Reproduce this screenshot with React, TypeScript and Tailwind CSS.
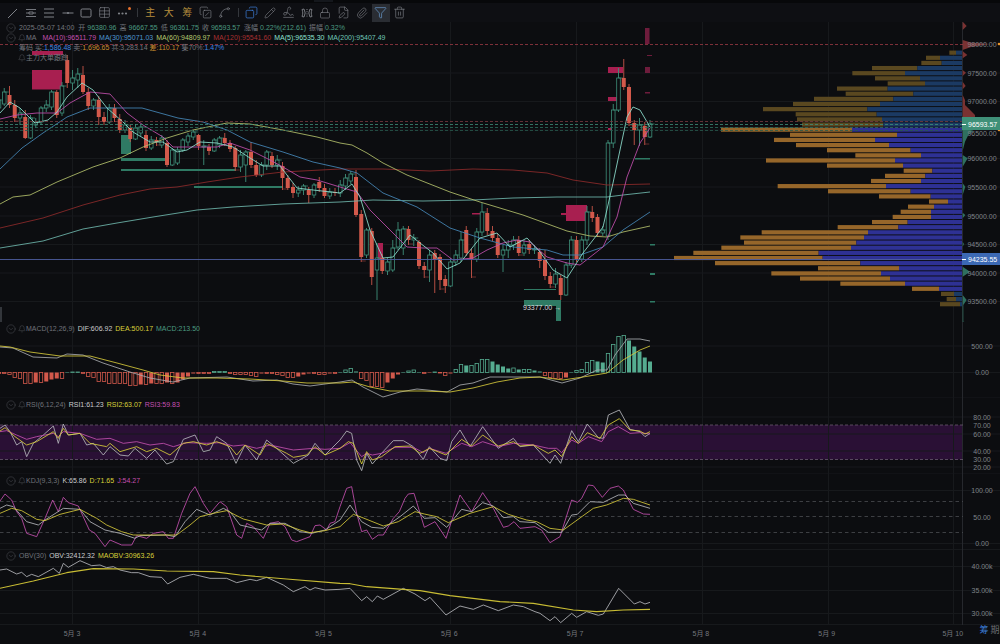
import { Bell, CircleChevronDown, Copy, CopySlash, FilePen, Funnel, Lock, Paperclip, Pencil, Signature, Spline, Table, Trash2 } from 'lucide-react'
import type { ReactNode } from 'react'

const GRID_X = [72.5, 198.5, 324.5, 450.5, 576.5, 702.5, 828.5, 953.5]
const GRID = '#17191c'

// zoom crop coordinates -> page coordinates
const z = (a: number[], x0: number, y0: number) => a.map((v, i) => (i % 2 ? y0 + v / 3 : x0 + v / 3))
const pts = (a: number[]) => a.join(' ')

// open, close (page y), high, low
const CANDLES: number[][] = [
  [108, 100, 96, 112], [104, 92, 88, 106], [95, 105, 86, 108], [105, 118, 100, 122], [118, 113, 108, 125],
  [117, 138, 110, 139], [138, 118, 115, 139], [125, 122, 118, 128], [122, 108, 106, 125], [108, 105, 100, 112],
  [107, 92, 90, 110], [92, 115, 90, 118], [113, 86, 82, 116], [60, 83, 55, 88], [83, 78, 70, 90],
  [80, 74, 68, 88], [75, 92, 66, 94], [92, 106, 88, 110], [106, 100, 98, 110], [100, 117, 96, 125],
  [117, 122, 112, 125], [122, 108, 104, 124], [108, 118, 104, 122], [119, 130, 114, 133], [130, 125, 120, 133],
  [128, 139, 125, 142], [139, 128, 124, 140], [133, 127, 124, 136], [135, 148, 130, 151], [148, 140, 136, 150],
  [140, 142, 137, 146], [145, 138, 135, 148], [143, 165, 140, 167], [165, 150, 148, 166], [163, 150, 147, 165],
  [150, 140, 138, 152], [142, 136, 133, 146], [137, 132, 130, 140], [135, 146, 134, 150], [146, 146, 140, 165],
  [147, 151, 144, 155], [151, 140, 138, 152], [145, 138, 136, 148], [138, 143, 133, 146], [143, 149, 140, 152],
  [148, 167, 146, 171], [167, 155, 150, 172], [165, 152, 150, 182], [152, 165, 142, 168], [165, 175, 160, 177],
  [175, 165, 162, 177], [165, 152, 150, 170], [156, 165, 152, 168], [165, 160, 155, 170], [166, 178, 162, 190],
  [178, 188, 175, 190], [187, 193, 183, 198], [193, 190, 186, 197], [190, 186, 184, 195], [190, 195, 187, 203],
  [195, 185, 183, 198], [182, 188, 177, 192], [188, 196, 184, 198], [196, 192, 188, 199], [192, 193, 188, 196],
  [193, 185, 180, 197], [186, 178, 174, 190], [181, 174, 171, 184], [177, 215, 170, 217], [214, 257, 210, 262],
  [255, 230, 228, 258], [231, 277, 228, 285], [270, 258, 243, 300], [258, 271, 254, 274], [271, 262, 258, 275],
  [270, 248, 240, 272], [247, 230, 222, 250], [248, 229, 226, 255], [229, 240, 226, 245], [240, 238, 234, 246],
  [242, 266, 240, 269], [266, 270, 262, 278], [270, 255, 250, 282], [253, 260, 250, 293], [257, 280, 254, 290],
  [279, 286, 275, 293], [286, 262, 258, 287], [262, 255, 250, 266], [258, 240, 232, 262], [230, 253, 226, 256],
  [253, 259, 249, 278], [259, 232, 228, 262], [232, 212, 203, 236], [213, 231, 208, 235], [231, 238, 226, 241],
  [238, 255, 234, 258], [255, 250, 245, 272], [250, 245, 240, 258], [245, 240, 236, 250], [240, 253, 236, 256],
  [253, 245, 240, 256], [244, 250, 240, 254], [250, 249, 245, 254], [252, 261, 248, 268], [260, 276, 250, 280],
  [276, 284, 272, 288], [284, 274, 268, 288], [278, 295, 275, 300], [295, 265, 262, 296], [265, 240, 236, 268],
  [240, 259, 236, 262], [259, 240, 236, 262], [240, 212, 206, 245], [212, 218, 206, 222], [217, 233, 214, 237],
  [233, 230, 226, 236], [236, 143, 140, 240], [143, 110, 104, 148], [110, 78, 68, 112], [78, 87, 59, 90],
  [87, 123, 84, 126], [123, 130, 120, 145], [130, 125, 118, 146], [126, 137, 122, 145], [137, 124, 120, 138],
]

const MA5 = [0, 113, 10, 102, 20, 108, 35, 123, 48, 120, 57, 112, 67, 97, 82, 83, 93, 90, 107, 108, 123, 122, 133, 132, 150, 142, 163, 142, 177, 152, 187, 150, 200, 142, 217, 143, 233, 147, 250, 158, 263, 166, 280, 166, 297, 188, 313, 190, 340, 193, 352, 184, 360, 197, 370, 230, 383, 258, 393, 257, 410, 235, 420, 243, 433, 253, 447, 269, 460, 263, 480, 238, 497, 233, 510, 247, 527, 238, 540, 252, 553, 270, 567, 278, 583, 253, 603, 227, 613, 183, 627, 117, 633, 107, 640, 110, 650, 127]
const MA10 = [0, 119, 17, 115, 37, 113, 57, 113, 70, 103, 90, 92, 110, 94, 127, 113, 143, 125, 163, 137, 173, 147, 200, 147, 217, 147, 230, 143, 250, 150, 270, 160, 283, 167, 300, 177, 317, 180, 340, 187, 357, 192, 370, 210, 390, 230, 407, 247, 423, 248, 437, 248, 453, 260, 473, 258, 487, 250, 503, 243, 517, 240, 530, 242, 547, 257, 567, 263, 580, 265, 603, 247, 617, 217, 627, 177, 640, 143, 650, 128]
const MA30 = [0, 169, 22, 148, 43, 133, 67, 117, 90, 108, 142, 108, 160, 113, 178, 118, 203, 122, 227, 130, 250, 142, 283, 152, 313, 162, 340, 168, 357, 173, 383, 193, 417, 207, 450, 228, 480, 238, 513, 247, 547, 250, 563, 255, 580, 255, 603, 247, 623, 230, 650, 212]
const MA60 = [0, 204, 13, 197, 30, 195, 57, 182, 93, 167, 120, 158, 143, 147, 167, 138, 193, 130, 227, 123, 250, 124, 283, 130, 317, 137, 340, 143, 352, 145, 367, 153, 383, 163, 407, 175, 450, 192, 480, 202, 523, 215, 567, 231, 590, 236, 607, 237, 623, 232, 650, 226]
const MA120 = [0, 228, 43, 218, 83, 205, 120, 195, 150, 189, 177, 187, 207, 182, 240, 177, 283, 172, 340, 169, 383, 169, 430, 171, 473, 169, 513, 170, 547, 173, 573, 180, 607, 185, 650, 184]
const MA200 = [0, 248, 43, 241, 83, 229, 117, 223, 153, 217, 197, 210, 233, 207, 283, 204, 340, 202, 373, 200, 423, 201, 473, 200, 513, 198, 557, 197, 607, 197, 623, 195, 650, 192]

// left edge of the orange part, split with the blue part (zoom px), top to bottom
const PROFILE = [
  [838, 858], [768, 810], [754, 815], [606, 742], [547, 705], [615, 750], [653, 765], [501, 653], [527, 730], [432, 670],
  [369, 630], [279, 592], [377, 620], [381, 636], [396, 640], [153, 546], [360, 681], [312, 615], [378, 657], [471, 722],
  [556, 753], [288, 675], [471, 699], [701, 787], [645, 766], [603, 753], [323, 648], [474, 722], [627, 782], [777, 834],
  [714, 792], [692, 783], [668, 783], [606, 713], [503, 685], [275, 594], [211, 582], [222, 559], [154, 543], [70, 446],
  [12, 458], [135, 571], [444, 687], [304, 633], [390, 660], [511, 705], [726, 807], [813, 852], [830, 858], [810, 870],
]
const DIM_ROWS = [0, 1, 2, 3, 4, 5, 6, 7, 8, 9, 10, 11, 12, 13, 14, 47, 48, 49]

const EDGE_RED = [878, 5, 890, 18, 878, 30, 878, 60, 905, 68, 960, 72, 905, 80, 878, 90, 880, 95, 892, 105, 878, 115, 878, 150, 888, 158, 878, 168, 878, 185, 887, 198, 878, 208, 878, 225, 885, 240, 885, 255, 895, 265, 915, 285, 915, 295, 878, 298]
const EDGE_GREEN = [878, 325, 910, 332, 895, 345, 885, 365, 878, 392, 878, 405, 893, 415, 878, 440, 878, 490, 886, 500, 878, 525, 878, 578, 886, 585, 878, 595, 878, 665, 882, 672, 878, 680, 878, 740, 900, 755, 878, 770, 878, 825, 890, 840, 880, 855, 880, 905, 892, 908, 878, 912]

const HIST = [
  -1, -1, -2, -5, -6, -11, -11, -10, -10, -9, -7, -6, -6, 0.5, 0.5, 0.5, -1, -4, -5, -9, -9, -11, -11, -11, -11,
  -13, -13, -12, -12, -11, -11, -11, -10, -11, -10, -7, -4, -1, -1, -1, -1, 1, 1, 1, -1, -2, -2, -2, -3, -4,
  -1, -1, -1, -2, -3, -5, -5, -4, -2, -1, -1, -2, -2, -1, -1, 0.5, 2.5, 4, 1, -6, -8, -14, -14, -15, -10, -6, -2,
  0.5, 1.5, 2.5, 0.5, -1, -0.5, 0.5, -0.5, -3, -1, 3, 8, 7, 7, 9, 13, 13, 11, 8, 6, 4, 4.5, 3, 3, 3,
  2, 1, -3, -5, -6, -6, -5, 0.5, 2, 3, 10, 12, 11, 10, 19, 28, 36, 37, 32, 26, 21, 15, 11,
]

const DEA = [0, 346, 10, 347, 30, 352, 60, 356, 90, 356, 117, 363, 143, 370, 160, 375, 183, 378, 217, 378, 250, 379, 283, 381, 307, 383, 340, 383, 353, 382, 370, 387, 390, 391, 423, 391, 450, 392, 473, 388, 497, 382, 520, 378, 540, 377, 563, 380, 583, 377, 607, 373, 623, 360, 640, 350, 650, 346]
const DIF = [0, 347, 13, 348, 33, 357, 57, 358, 67, 354, 83, 355, 103, 363, 130, 372, 150, 378, 173, 382, 190, 378, 227, 377, 253, 381, 277, 380, 293, 384, 310, 386, 340, 382, 352, 380, 363, 387, 383, 397, 400, 392, 417, 389, 447, 392, 460, 385, 473, 383, 490, 377, 513, 377, 540, 377, 562, 383, 580, 378, 597, 370, 607, 370, 615, 355, 627, 339, 640, 339, 650, 341]

const RSI1 = [...z([0, 325, 15, 315, 30, 335, 50, 375, 65, 365, 80, 410, 100, 370, 130, 345, 160, 318, 175, 370, 190, 312, 205, 345, 240, 340, 260, 375, 280, 370, 310, 405, 330, 380, 360, 405, 385, 408, 405, 385, 440, 415, 465, 390, 500, 432, 520, 425, 550, 358, 585, 345, 610, 395, 630, 390, 650, 350, 680, 370, 708, 430, 735, 375, 770, 420, 800, 360, 830, 385, 880, 430, 925, 405, 945, 370, 975, 405, 1020, 360], 0, 320), ...z([20, 333, 35, 340, 50, 420, 65, 452, 80, 400, 97, 432, 120, 405, 160, 362, 190, 362, 220, 380, 250, 418, 268, 380, 300, 415, 320, 422, 335, 365, 360, 330, 390, 380, 428, 320, 475, 385, 520, 355, 540, 380, 580, 375, 630, 430, 645, 405, 662, 430, 695, 332, 715, 365, 742, 312, 775, 353, 790, 355, 805, 285, 838, 270, 870, 328, 900, 335, 915, 350, 930, 340], 340, 320)]
const RSI2 = [...z([0, 333, 15, 323, 45, 350, 80, 375, 110, 365, 160, 335, 175, 355, 190, 325, 205, 345, 240, 340, 270, 370, 320, 380, 330, 370, 360, 395, 410, 380, 440, 395, 470, 385, 510, 405, 550, 370, 580, 365, 620, 375, 650, 365, 690, 380, 710, 405, 735, 375, 780, 405, 800, 370, 860, 400, 880, 412, 920, 405, 945, 380, 975, 405, 1020, 385], 0, 320), ...z([25, 365, 40, 370, 65, 432, 80, 395, 97, 420, 125, 410, 165, 380, 210, 378, 240, 400, 268, 385, 318, 405, 365, 358, 395, 378, 428, 345, 475, 378, 520, 365, 540, 378, 580, 375, 625, 400, 645, 390, 665, 410, 695, 350, 715, 370, 742, 338, 780, 355, 805, 315, 838, 296, 870, 330, 900, 333, 915, 342, 930, 335], 340, 320)]
const RSI3 = [...z([0, 335, 20, 332, 50, 345, 80, 358, 110, 350, 160, 340, 175, 350, 190, 335, 240, 340, 290, 358, 330, 355, 370, 370, 410, 365, 450, 375, 490, 370, 520, 380, 560, 368, 620, 370, 660, 368, 700, 378, 730, 375, 770, 385, 810, 375, 880, 390, 940, 385, 975, 388, 1020, 385], 0, 320), ...z([30, 368, 65, 410, 80, 400, 97, 405, 125, 400, 165, 382, 220, 382, 250, 398, 268, 385, 318, 400, 365, 370, 395, 380, 428, 365, 475, 380, 520, 370, 580, 375, 625, 385, 650, 385, 665, 398, 695, 360, 715, 370, 745, 350, 785, 365, 805, 335, 835, 320, 870, 340, 900, 338, 930, 342], 340, 320)]

const KDJ_J = [...z([0, 93, 15, 72, 35, 90, 50, 125, 65, 145, 80, 190, 110, 200, 135, 145, 158, 90, 175, 125, 190, 82, 205, 98, 235, 108, 268, 180, 285, 190, 315, 230, 330, 210, 365, 225, 395, 225, 410, 197, 440, 205, 460, 190, 490, 185, 505, 205, 520, 205, 545, 130, 570, 70, 585, 50, 610, 100, 630, 130, 660, 95, 680, 110, 710, 195, 725, 205, 740, 160, 760, 170, 790, 205, 810, 160, 835, 155, 855, 170, 875, 210, 890, 215, 930, 200, 945, 167, 960, 165, 980, 180, 990, 160, 1005, 155, 1020, 110], 0, 470), ...z([20, 55, 35, 50, 50, 130, 65, 185, 80, 180, 97, 208, 115, 195, 130, 195, 160, 145, 178, 125, 195, 85, 205, 72, 222, 70, 253, 172, 285, 155, 318, 205, 360, 75, 395, 125, 428, 68, 460, 115, 490, 172, 505, 168, 522, 155, 540, 175, 585, 170, 605, 180, 630, 218, 660, 200, 695, 90, 712, 97, 725, 85, 745, 45, 760, 47, 787, 82, 810, 55, 835, 48, 850, 60, 880, 118, 910, 132, 930, 133], 340, 470)]
const KDJ_K = [...z([0, 115, 20, 105, 40, 110, 80, 155, 115, 165, 135, 150, 190, 115, 240, 118, 270, 155, 315, 180, 360, 190, 405, 205, 420, 197, 500, 195, 525, 200, 555, 155, 590, 118, 630, 135, 670, 115, 690, 125, 720, 165, 785, 180, 810, 160, 855, 160, 900, 185, 935, 190, 975, 180, 1020, 150], 0, 470), ...z([30, 105, 65, 155, 95, 172, 130, 175, 180, 140, 220, 108, 253, 145, 285, 143, 320, 172, 365, 118, 395, 125, 428, 98, 460, 108, 490, 143, 520, 140, 540, 155, 585, 158, 625, 187, 665, 187, 695, 135, 712, 133, 750, 95, 790, 97, 835, 75, 855, 75, 880, 100, 930, 115], 340, 470)]
const KDJ_D = [...z([0, 130, 35, 115, 65, 122, 110, 148, 135, 152, 180, 133, 240, 118, 290, 145, 320, 165, 365, 185, 400, 195, 450, 195, 530, 195, 570, 165, 600, 140, 640, 130, 680, 122, 730, 147, 800, 165, 850, 162, 900, 180, 930, 188, 975, 182, 1020, 170], 0, 470), ...z([40, 133, 60, 140, 130, 168, 175, 155, 225, 125, 253, 132, 290, 140, 325, 158, 390, 130, 460, 110, 505, 133, 560, 150, 590, 155, 630, 175, 670, 180, 760, 115, 800, 105, 850, 85, 880, 88, 930, 105], 340, 470)]

const OBV = [...z([0, 300, 20, 297, 50, 312, 65, 307, 80, 320, 95, 313, 115, 320, 160, 295, 178, 310, 190, 280, 205, 292, 240, 272, 275, 287, 300, 285, 320, 293, 340, 290, 360, 300, 395, 308, 415, 308, 450, 320, 485, 322, 503, 342, 540, 322, 580, 313, 630, 325, 680, 325, 710, 338, 750, 328, 770, 332, 800, 322, 850, 345, 880, 365, 915, 350, 930, 360, 945, 353, 975, 360, 1020, 358], 0, 470), ...z([30, 355, 65, 392, 80, 380, 97, 395, 112, 378, 130, 388, 190, 355, 225, 372, 255, 392, 270, 382, 318, 435, 360, 408, 400, 418, 430, 405, 475, 422, 520, 405, 550, 410, 585, 425, 600, 430, 630, 452, 645, 440, 662, 458, 695, 430, 710, 442, 740, 425, 775, 436, 790, 432, 836, 355, 883, 402, 900, 395, 915, 402, 930, 397], 340, 470)]
const MAOBV = [...z([0, 355, 100, 333, 200, 308, 280, 296, 400, 297, 500, 303, 640, 305, 720, 315, 860, 327, 1020, 340], 0, 470), ...z([30, 341, 80, 350, 190, 358, 240, 362, 330, 377, 480, 395, 580, 400, 700, 420, 770, 425, 850, 420, 930, 418], 340, 470)]

function Line({ d, color, width = 0.85 }: { d: number[]; color: string; width?: number }) {
  return <polyline points={pts(d)} fill="none" stroke={color} strokeWidth={width} strokeLinejoin="round" />
}

function Grid({ top, bottom, ys }: { top: number; bottom: number; ys: number[] }) {
  return (
    <g stroke={GRID} strokeWidth="1">
      {GRID_X.map((x) => <line key={x} x1={x} x2={x} y1={top} y2={bottom} />)}
      {ys.map((y) => <line key={y} x1="0" x2="1000" y1={y} y2={y} />)}
      <line x1="962.5" x2="962.5" y1={top} y2={bottom} stroke="#26282d" />
    </g>
  )
}

function AxisLabels({ items }: { items: [string, number][] }) {
  return (
    <g className="fill-[#7f8288] text-[7px]" textAnchor="middle">
      {items.map(([t, y]) => <text key={t} x="982" y={y + 2.5}>{t}</text>)}
    </g>
  )
}

function Pane({ top, h, box, legend, children }: { top: number; h: number; box: string; legend?: ReactNode; children: ReactNode }) {
  return (
    <div className={`relative w-full shrink-0 ${box}`}>
      <svg className="block h-full w-full" viewBox={`0 ${top} 1000 ${h}`} preserveAspectRatio="none">{children}</svg>
      {legend}
    </div>
  )
}

function Chev() {
  return <CircleChevronDown size={10} strokeWidth={1} className="shrink-0 text-[#5c5f65]" />
}

function Legend({ name, bell = true, items }: { name: string; bell?: boolean; items: [string, string][] }) {
  return (
    <div className="absolute left-[6px] top-[2px] flex h-[10px] items-center text-[7px] text-[#6f7279]">
      <Chev />
      {bell && <Bell size={8} strokeWidth={1} className="ml-[2px] shrink-0" />}
      <span className={bell ? '' : 'ml-[3px]'}>{name}</span>
      {items.map(([t, c]) => <span key={t} className={`ml-[3px] ${c}`}>{t}</span>)}
    </div>
  )
}

function IconLine() {
  return <svg width="14" height="14" viewBox="0 0 14 14" stroke="currentColor" fill="none"><path d="M3 12 12 3" /></svg>
}
function IconRows() {
  return <svg width="14" height="14" viewBox="0 0 14 14" stroke="currentColor" fill="none"><path d="M2 3.5h10M2 10.5h10M2 7h3M9 7h3M5 6h4v2H5z" strokeWidth=".9" /></svg>
}
function IconLines() {
  return <svg width="14" height="14" viewBox="0 0 14 14" stroke="currentColor" fill="none"><path d="M2 3h10M2 7h10M2 11h10" /></svg>
}
function IconHLine() {
  return <svg width="14" height="14" viewBox="0 0 14 14" stroke="currentColor" fill="currentColor"><path d="M1.5 7h11" /><circle cx="7" cy="7" r="1" stroke="none" /></svg>
}
function IconRect() {
  return <svg width="14" height="14" viewBox="0 0 14 14" stroke="currentColor" fill="none"><rect x="2" y="3" width="10" height="8" rx="1.2" /></svg>
}
function IconMore() {
  return (
    <span className="relative flex h-[14px] w-[14px] items-center justify-center">
      <svg width="14" height="14" viewBox="0 0 14 14" fill="currentColor"><circle cx="3" cy="7.5" r="1.1" /><circle cx="6.5" cy="7.5" r="1.1" /><circle cx="10" cy="7.5" r="1.1" /></svg>
      <span className="absolute right-[-1px] top-[1px] h-[3px] w-[3px] rounded-full bg-[#e8722c]" />
    </span>
  )
}
function IconBrackets() {
  return <svg width="14" height="14" viewBox="0 0 14 14" stroke="currentColor" fill="none"><path d="M2 3.5 4 3l1.200 4L4 11l-2-.5C3 8 3 6 2 3.500ZM12 3.500 10 3 8.800 7 10 11l2-.5C11 8 11 6 12 3.500Z" strokeWidth=".9" /><path d="M7 3v8" strokeDasharray="1 1.200" /></svg>
}

function ToolBtn({ children, active }: { children: ReactNode; active?: boolean }) {
  return (
    <button className={`flex h-[18px] w-[18.5px] items-center justify-center ${active ? 'bg-[#2a2d33] text-[#6ea2d8]' : 'text-[#7f8288]'}`}>
      {children}
    </button>
  )
}

function Toolbar() {
  return (
    <div className="flex h-[22px] w-full shrink-0 flex-col">
      <div className="h-[3px] w-full bg-[#07080a] pl-[314px]">
        <div className="h-[2px] w-[19px] bg-[#14171c]" />
      </div>
      <div className="flex h-[19px] items-center bg-[#0e0f13] pl-[3px]">
        <ToolBtn><IconLine /></ToolBtn>
        <ToolBtn><IconRows /></ToolBtn>
        <ToolBtn><IconLines /></ToolBtn>
        <ToolBtn><IconHLine /></ToolBtn>
        <ToolBtn><IconRect /></ToolBtn>
        <ToolBtn><Table size={13} strokeWidth={1.2} /></ToolBtn>
        <ToolBtn><IconMore /></ToolBtn>
        <div className="ml-[4px] mr-[3.5px] h-[9px] w-px bg-[#34373c]" />
        {['主', '大', '筹'].map((t) => (
          <ToolBtn key={t}><span className="text-[10px] text-[#b48c3c]">{t}</span></ToolBtn>
        ))}
        <ToolBtn><CopySlash size={13} strokeWidth={1.2} /></ToolBtn>
        <ToolBtn><Spline size={13} strokeWidth={1.2} /></ToolBtn>
        <div className="ml-[4px] mr-[3.5px] h-[9px] w-px bg-[#34373c]" />
        <ToolBtn><Copy size={13} strokeWidth={1.4} className="-scale-x-100 text-[#3a78d0]" /></ToolBtn>
        <ToolBtn><Pencil size={12} strokeWidth={1.2} /></ToolBtn>
        <ToolBtn><Signature size={13} strokeWidth={1.2} /></ToolBtn>
        <ToolBtn><IconBrackets /></ToolBtn>
        <ToolBtn><Lock size={12} strokeWidth={1.2} /></ToolBtn>
        <ToolBtn><FilePen size={13} strokeWidth={1.2} /></ToolBtn>
        <ToolBtn><Paperclip size={12} strokeWidth={1.2} /></ToolBtn>
        <ToolBtn active><Funnel size={13} strokeWidth={1.2} /></ToolBtn>
        <ToolBtn><Trash2 size={13} strokeWidth={1.2} /></ToolBtn>
      </div>
    </div>
  )
}

function MainLegend() {
  const g = 'text-[#4b9a80]'
  return (
    <div className="absolute left-[6px] top-px flex flex-col text-[7px] text-[#73767d]">
      <div className="flex h-[10px] items-center">
        <Chev />
        <span className="ml-[3px]">2025-05-07 14:00</span>
        <span className="ml-[4px]">开</span><span className={`ml-[2px] ${g}`}>96380.96</span>
        <span className="ml-[3px]">高</span><span className={`ml-[2px] ${g}`}>96667.55</span>
        <span className="ml-[3px]">低</span><span className={`ml-[2px] ${g}`}>96361.75</span>
        <span className="ml-[3px]">收</span><span className={`ml-[2px] ${g}`}>96593.57</span>
        <span className="ml-[4px]">涨幅</span><span className={`ml-[2px] ${g}`}>0.22%(212.61)</span>
        <span className="ml-[3px]">振幅</span><span className={`ml-[2px] ${g}`}>0.32%</span>
      </div>
      <div className="flex h-[10px] items-center">
        <Chev />
        <Bell size={8} strokeWidth={1} className="ml-[2px]" />
        <span>MA</span>
        <span className="ml-[6px] text-[#c44fb0]">MA(10):96511.79</span>
        <span className="ml-[3px] text-[#4d97d0]">MA(30):95071.03</span>
        <span className="ml-[3px] text-[#b5c96f]">MA(60):94809.97</span>
        <span className="ml-[3px] text-[#a83030]">MA(120):95541.60</span>
        <span className="ml-[3px] text-[#8de0d2]">MA(5):96535.30</span>
        <span className="ml-[3px] text-[#6fc4b6]">MA(200):95407.49</span>
      </div>
      <div className="flex h-[10px] items-center pl-[13px]">
        <span>筹码</span>
        <span className="ml-[2px]">买:</span><span className="text-[#3f86e0]">1,586.48</span>
        <span className="ml-[2px]">卖:</span><span className="text-[#c98a2e]">1,696.65</span>
        <span className="ml-[2px]">共:3,283.14</span>
        <span className="ml-[2px] text-[#c98a2e]">差:110.17</span>
        <span className="ml-[2px]">集70%:</span><span className="text-[#3f86e0]">1.47%</span>
      </div>
      <div className="flex h-[10px] items-center pl-[12px]">
        <Bell size={8} strokeWidth={1} />
        <span>主力大单跟踪</span>
      </div>
    </div>
  )
}

function MainChart() {
  const ys = [73, 101.5, 130, 158.5, 187, 216, 244.5, 273, 301.5]
  return (
    <>
      <Grid top={22} bottom={322} ys={ys} />
      {/* chip profile */}
      {PROFILE.map(([l, s], i) => {
        const y = 20 + (98 + i * 15.4) / 3 - 2.1
        const dim = DIM_ROWS.includes(i)
        return (
          <g key={i}>
            <rect x={670 + l / 3} y={y} width={(s - l) / 3} height="4.2" fill={dim ? '#5a4820' : '#96662a'} />
            <rect x={670 + s / 3} y={y} width={962 - 670 - s / 3} height="4.2" fill={dim ? '#1b3a63' : '#2e3194'} />
          </g>
        )
      })}
      <polygon points={pts(z(EDGE_RED, 670, 20))} fill="#7a3232" />
      <polygon points={pts(z(EDGE_GREEN, 670, 20))} fill="#2f6f5e" />

      {/* order blocks */}
      <g fill="#a81f50">
        <rect x="32" y="51" width="31" height="4" />
        <rect x="32" y="70" width="30" height="19.500" />
        <rect x="378" y="243" width="5" height="17" />
        <rect x="472" y="213" width="10" height="1.500" />
        <rect x="561" y="213" width="5" height="2" />
        <rect x="566" y="205" width="21" height="16" />
        <rect x="608" y="67" width="15" height="6" />
        <rect x="608" y="97" width="10" height="4" />
        <rect x="608" y="128" width="4" height="2" />
      </g>
      <g fill="#6e1c3c">
        <rect x="645" y="28" width="4.500" height="16" />
        <rect x="645" y="67" width="5" height="6" />
        <rect x="647" y="55" width="5" height="1" />
        <rect x="645" y="92" width="5" height="1.500" />
      </g>
      <g fill="#2f7a64">
        <rect x="121" y="135" width="10" height="19" />
        <rect x="121" y="158" width="45" height="3" />
        <rect x="121" y="169" width="115" height="2" />
        <rect x="194" y="186" width="89" height="2" />
        <rect x="524" y="289" width="32" height="1" />
        <rect x="524" y="300" width="37" height="6" />
        <rect x="556" y="306" width="5" height="15" />
        <rect x="635" y="158" width="15" height="1.500" />
        <rect x="650" y="244" width="5" height="1.500" />
        <rect x="650" y="273" width="5" height="2" />
        <rect x="650" y="301" width="5" height="1.500" />
      </g>

      {/* candles */}
      {CANDLES.map(([o, c, h, l], i) => {
        const x = -1 + 5.25 * i
        const up = c <= o
        const top = Math.min(o, c)
        const bh = Math.max(Math.abs(o - c), 1)
        return (
          <g key={i}>
            <line x1={x} x2={x} y1={h} y2={l} stroke={up ? '#3f8f7a' : '#c9564a'} strokeWidth="0.9" />
            {up ? (
              <>
                <rect x={x - 1.8} y={top} width="3.600" height={bh} fill="#0c0d10" stroke="#3f8f7a" strokeWidth="0.8" />
                <line x1={x} x2={x + 4.5} y1={c} y2={c} stroke="#3f8f7a" strokeWidth="0.7" />
              </>
            ) : (
              <>
                <rect x={x - 2} y={top} width="4" height={bh} fill="#d3594b" />
                {i % 3 === 0 && <line x1={x} x2={x + 4.5} y1={l - 1} y2={l - 1} stroke="#8c3a38" strokeWidth="0.7" />}
              </>
            )}
          </g>
        )
      })}

      <Line d={MA200} color="#6fb8ae" />
      <Line d={MA120} color="#8e2a2a" />
      <Line d={MA60} color="#b3c06c" />
      <Line d={MA30} color="#4688b8" />
      <Line d={MA10} color="#c34fae" />
      <Line d={MA5} color="#8fe0d0" />

      {/* price levels */}
      <line x1="0" x2="963" y1="44.500" y2="44.500" stroke="#9c3a44" strokeDasharray="3 2" strokeWidth="0.8" />
      <line x1="0" x2="963" y1="121.500" y2="121.500" stroke="#7a3a40" strokeDasharray="3 2" strokeWidth="0.8" />
      <line x1="0" x2="963" y1="124.500" y2="124.500" stroke="#3f8f7a" strokeDasharray="3 2" strokeWidth="0.8" />
      <line x1="0" x2="963" y1="127.500" y2="127.500" stroke="#2f6f5e" strokeDasharray="3 2" strokeWidth="0.8" />
      <line x1="0" x2="963" y1="130.500" y2="130.500" stroke="#27594c" strokeDasharray="3 2" strokeWidth="0.8" />
      <line x1="0" x2="963" y1="259.500" y2="259.500" stroke="#4d5c9e" strokeWidth="0.9" />

      <text x="523" y="309.500" className="fill-[#d8dadd] text-[7px]">93377.00 →</text>

      <AxisLabels items={[['98000.00', 44], ['97500.00', 73], ['97000.00', 101.5], ['96000.00', 158.5], ['95500.00', 187], ['95000.00', 216], ['94500.00', 244.5], ['94000.00', 273], ['93500.00', 301.5]]} />
      <text x="982" y="136" textAnchor="middle" className="fill-[#7f8288] text-[7px]">96500.00</text>
      <circle cx="999" cy="44" r="1.300" fill="#e8952c" />
      <circle cx="999" cy="130" r="1.300" fill="#e8952c" />

      <rect x="962" y="117" width="38" height="13" fill="#3f9078" />
      <line x1="962" x2="966" y1="124.500" y2="124.500" stroke="#fff" />
      <text x="968" y="126.500" className="fill-white text-[7px]">96593.57</text>
      <rect x="962" y="253" width="38" height="12" fill="#3c69b4" />
      <line x1="962" x2="966" y1="259.500" y2="259.500" stroke="#fff" />
      <text x="968" y="261.500" className="fill-white text-[7px]">94235.55</text>
      <rect x="0" y="307" width="2" height="15" fill="#33363b" />
    </>
  )
}

function MacdChart() {
  return (
    <>
      <Grid top={322} bottom={398} ys={[346, 372.5, 398]} />
      {HIST.map((v, i) => {
        const x = -1 + 5.25 * i
        const color = v > 0 ? '#55ac90' : '#d3594b'
        const growing = Math.abs(v) >= Math.abs(HIST[i - 1] ?? 0)
        const h = Math.abs(v)
        const y = v > 0 ? 372.5 - h : 372.5
        return growing
          ? <rect key={i} x={x - 1.7} y={y} width="3.400" height={h} fill="none" stroke={color} strokeWidth="0.8" />
          : <rect key={i} x={x - 2} y={y} width="4" height={h} fill={color} />
      })}
      <Line d={DIF} color="#a8aaae" />
      <Line d={DEA} color="#d4c83a" />
      <AxisLabels items={[['500.00', 346], ['0.00', 372.5]]} />
    </>
  )
}

function RsiChart() {
  return (
    <>
      <rect x="0" y="425" width="962.500" height="34.500" fill="#2a1035" />
      <Grid top={398} bottom={474} ys={[417, 434, 451, 467, 474]} />
      <line x1="0" x2="963" y1="425" y2="425" stroke="#6a5a70" strokeDasharray="3 2" strokeWidth="0.8" />
      <line x1="0" x2="963" y1="459.500" y2="459.500" stroke="#6a5a70" strokeDasharray="3 2" strokeWidth="0.8" />
      <Line d={RSI1} color="#b5b6ba" />
      <Line d={RSI3} color="#c34fae" />
      <Line d={RSI2} color="#d8cf3a" />
      <AxisLabels items={[['80.00', 417], ['70.00', 425.5], ['60.00', 434], ['40.00', 451], ['30.00', 459.5], ['20.00', 467.5]]} />
    </>
  )
}

function KdjChart() {
  return (
    <>
      <Grid top={474} bottom={549} ys={[490.5, 543.5]} />
      {[501.5, 516.5, 532.5].map((y) => (
        <line key={y} x1="0" x2="963" y1={y} y2={y} stroke="#4a4c50" strokeDasharray="3.500 3" strokeWidth="0.8" />
      ))}
      <Line d={KDJ_J} color="#c34fae" />
      <Line d={KDJ_K} color="#b5b6ba" />
      <Line d={KDJ_D} color="#d4c83a" />
      <AxisLabels items={[['100.00', 490.5], ['50.00', 517], ['0.00', 543.5]]} />
    </>
  )
}

function ObvChart() {
  return (
    <>
      <Grid top={549} bottom={625} ys={[549.5, 566.5, 590.5, 613.5, 624.5]} />
      <Line d={OBV} color="#b5b6ba" />
      <Line d={MAOBV} color="#c8bc34" width={1.1} />
      <AxisLabels items={[['40.00k', 566.5], ['35.00k', 590.5], ['30.00k', 613.5]]} />
    </>
  )
}

function TimeAxis() {
  const days = ['5月 3', '5月 4', '5月 5', '5月 6', '5月 7', '5月 8', '5月 9', '5月 10']
  return (
    <div className="flex h-[19px] w-full items-start">
      <div className="flex h-[18px] w-[962.500px] items-center justify-between pl-[62px] text-[7px] text-[#75787e]">
        {days.map((d) => <span key={d} className="w-[20px] whitespace-nowrap text-center">{d}</span>)}
      </div>
      <div className="flex flex-1 gap-[2px] pl-[17px] text-[9px] leading-[11px]">
        <span className="text-[#3c7fdc]">筹</span>
        <span className="text-[#6a6d73]">期</span>
      </div>
    </div>
  )
}

export default function App() {
  return (
    <div className="flex h-[644px] w-[1000px] flex-col overflow-hidden bg-[#0c0d10] font-['Liberation_Sans','Noto_Sans_CJK_SC',sans-serif]">
      <Toolbar />
      <Pane top={22} h={300} box="h-[300px]" legend={<MainLegend />}><MainChart /></Pane>
      <Pane top={322} h={76} box="h-[76px]" legend={<Legend name="MACD(12,26,9)" items={[['DIF:606.92', 'text-[#c9cacd]'], ['DEA:500.17', 'text-[#d8cf3a]'], ['MACD:213.50', 'text-[#4b9a80]']]} />}><MacdChart /></Pane>
      <Pane top={398} h={76} box="h-[76px]" legend={<Legend name="RSI(6,12,24)" items={[['RSI1:61.23', 'text-[#c9cacd]'], ['RSI2:63.07', 'text-[#d8cf3a]'], ['RSI3:59.83', 'text-[#c44fb0]']]} />}><RsiChart /></Pane>
      <Pane top={474} h={75} box="h-[75px]" legend={<Legend name="KDJ(9,3,3)" items={[['K:65.86', 'text-[#c9cacd]'], ['D:71.65', 'text-[#d8cf3a]'], ['J:54.27', 'text-[#c44fb0]']]} />}><KdjChart /></Pane>
      <Pane top={549} h={76} box="h-[76px]" legend={<Legend name="OBV(30)" bell={false} items={[['OBV:32412.32', 'text-[#c9cacd]'], ['MAOBV:30963.26', 'text-[#d8cf3a]']]} />}><ObvChart /></Pane>
      <TimeAxis />
    </div>
  )
}
